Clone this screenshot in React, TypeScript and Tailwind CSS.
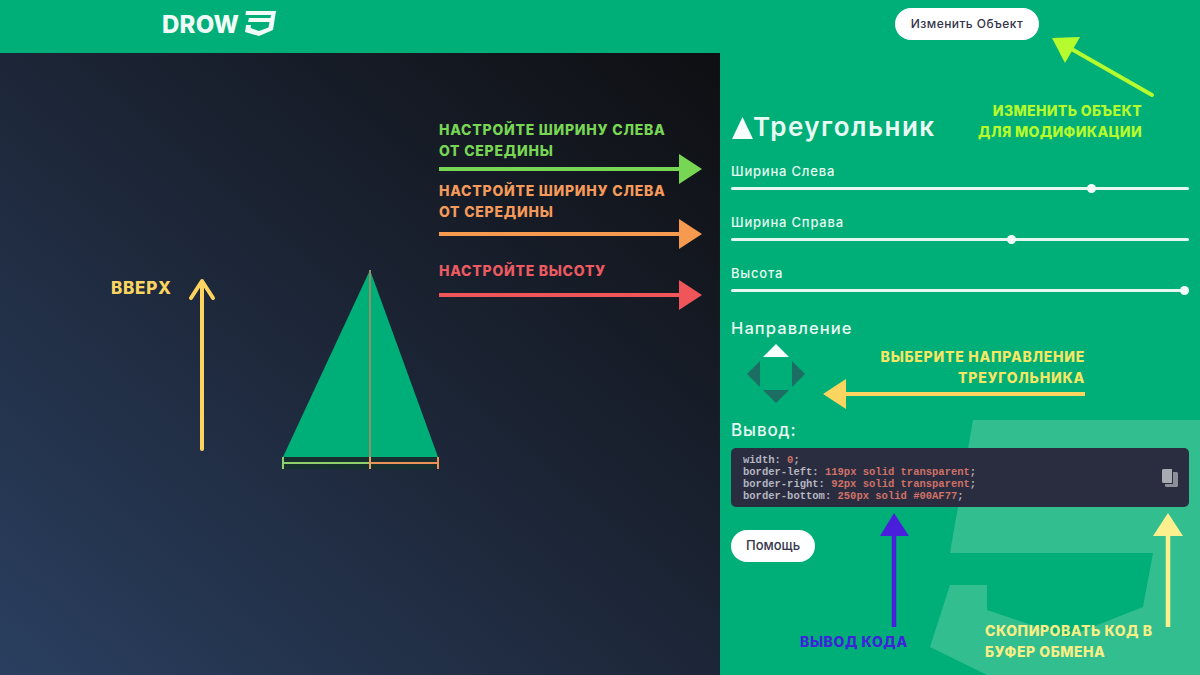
const GREEN = "#00AF77";

function Slider({ label, thumb }: { label: string; thumb: number }) {
  return (
    <div className="h-[51px]">
      <div className="text-[13px] leading-[16px] font-medium tracking-[0.8px] text-[#e6f8f1]">{label}</div>
      <div className="relative mt-[8px] h-[3px] rounded-full bg-[#e4f7f0]">
        <span
          className="absolute top-[-3px] h-[9px] w-[9px] rounded-full bg-[#f2fbf8]"
          style={{ left: thumb }}
        />
      </div>
    </div>
  );
}

function Note({ className, lines }: { className: string; lines: string[] }) {
  return (
    <div className={"absolute z-20 leading-[21px] font-extrabold whitespace-nowrap " + className}>
      {lines.map((l) => (
        <div key={l}>{l}</div>
      ))}
    </div>
  );
}

function Arrows() {
  return (
    <svg className="absolute top-0 left-0 z-10" width="1200" height="675" viewBox="0 0 1200 675" fill="none">
      {/* left panel arrows */}
      <path d="M439 169H680" stroke="#78d655" strokeWidth="4" />
      <path d="M679 154L702 169L679 184Z" fill="#78d655" />
      <path d="M439 234H680" stroke="#f59a4e" strokeWidth="4" />
      <path d="M679 219L702 234L679 249Z" fill="#f59a4e" />
      <path d="M439 295H680" stroke="#f0555a" strokeWidth="4" />
      <path d="M679 280L702 295L679 310Z" fill="#f0555a" />
      <path d="M202 449V283" stroke="#fcd561" strokeWidth="4" strokeLinecap="round" />
      <path d="M191 298L202 281L213 298" stroke="#fcd561" strokeWidth="4" strokeLinecap="round" strokeLinejoin="round" />
      {/* right panel arrows */}
      <path d="M1152 95L1068 47" stroke="#b6fb2d" strokeWidth="4" strokeLinecap="round" />
      <path d="M1052 38L1080 37L1065 63Z" fill="#b6fb2d" />
      <path d="M1085 394H840" stroke="#fcd561" strokeWidth="4" />
      <path d="M846 379L823 394L846 409Z" fill="#fcd561" />
      <path d="M894 627V530" stroke="#4a1fdc" strokeWidth="4.5" />
      <path d="M880 536L894 513L909 536Z" fill="#4a1fdc" />
      <path d="M1168 627V530" stroke="#fbf08d" strokeWidth="4.5" />
      <path d="M1153 536L1168 513L1183 536Z" fill="#fbf08d" />
    </svg>
  );
}

export default function App() {
  return (
    <div
      className="relative flex h-[675px] w-[1200px] flex-col overflow-hidden"
      style={{ fontFamily: "Inter, 'Noto Sans', 'Liberation Sans', sans-serif", backgroundColor: GREEN }}
    >
      <header className="flex h-[53px] shrink-0 items-start bg-[#00AF77] pt-[8px] pl-[162px]">
        <div className="flex h-[34px] w-[733px] items-center gap-[4px]">
          <span className="text-[24px] leading-none font-extrabold tracking-[0.2px] text-[#f0fbf7]">DROW</span>
          <svg className="mb-[3px]" width="33" height="26" viewBox="0 0 33 26" fill="#f0fbf7">
            <path d="M3 0H33L30 19L16 25L2 21L3 14H8L7.6 17L16 20L25.5 16.5L26.5 11H5L6 7H27.500L28 4H2.500Z" />
          </svg>
        </div>
        <button className="flex h-[32px] w-[144px] items-center justify-center rounded-full bg-white text-[12px] font-medium tracking-[0.45px] text-[#34344a]">
          Изменить Объект
        </button>
      </header>

      <main className="flex flex-1">
        <section className="relative w-[720px] bg-linear-to-tr from-[#2a3f60] via-[#1c2536] via-[52%] to-[#0e0f12]">
          <svg className="absolute top-[217px] left-[282px]" width="158" height="200" viewBox="0 0 158 200" fill="none">
            <path d="M1 187L88 0L156 187Z" fill="#00AF77" />
            <rect x="1" y="187" width="155" height="12" fill="#17302f" />
            <path d="M88 0V199" stroke="#8f8f6c" strokeWidth="2" />
            <path d="M1 193H88" stroke="#8fcf6d" strokeWidth="2" />
            <path d="M88 193H156" stroke="#ec8f59" strokeWidth="2" />
            <path d="M1 187V199" stroke="#8fcf6d" strokeWidth="2" />
            <path d="M156 187V199" stroke="#ec8f59" strokeWidth="2" />
            <path d="M88 187V199" stroke="#ec9f60" strokeWidth="2" />
          </svg>
        </section>

        <section className="relative w-[480px] overflow-hidden px-[11px]">
          <svg className="absolute top-[-53px] left-[-720px]" width="1200" height="675" viewBox="0 0 1200 675" fill="#33be8f">
            <path d="M973 420H1200V675H987L930 647L950 585H987V610L1067 637L1143 607L1153 553H950Z" />
          </svg>
          <div className="relative">
            <div className="mt-[59px] flex h-[30px] items-center">
              <svg width="21" height="22" viewBox="0 0 21 22" fill="#f6fdfb" className="mt-[1px] ml-[1px]">
                <path d="M10.5 0L21 22H0Z" />
              </svg>
              <h1 className="text-[26px] leading-none font-semibold tracking-[1.5px] text-[#e9faf4]">Треугольник</h1>
            </div>
            <div className="mt-[21px]">
              <Slider label="Ширина Слева" thumb={356} />
              <Slider label="Ширина Справа" thumb={276} />
              <Slider label="Высота" thumb={449} />
            </div>
            <div className="mt-[2px] text-[16.5px] leading-[20px] font-medium tracking-[1.1px] text-[#e9faf4]">Направление</div>
            <svg className="mt-[6px] ml-[15px]" width="60" height="60" viewBox="0 0 60 60">
              <path d="M30 0L43 13H17Z" fill="#f6fdfb" />
              <path d="M30 59L43 46H17Z" fill="#1c6e63" />
              <path d="M1 30L14 17V43Z" fill="#1c6e63" />
              <path d="M59 30L46 17V43Z" fill="#1c6e63" />
            </svg>
            <div className="mt-[15px] text-[17px] leading-[22px] font-medium tracking-[0.9px] text-[#e9faf4]">Вывод:</div>
            <div className="mt-[7px] flex h-[59px] items-center justify-between rounded-[5px] bg-[#2a2c3f] pr-[11px] pl-[12px]">
              <pre className="font-['Liberation_Mono',monospace] text-[10.5px] leading-[12px] font-bold text-[#b5b7c2]">
                <div>width: <span className="text-[#cf7267]">0</span>;</div>
                <div>border-left: <span className="text-[#cf7267]">119px solid transparent</span>;</div>
                <div>border-right: <span className="text-[#cf7267]">92px solid transparent</span>;</div>
                <div>border-bottom: <span className="text-[#cf7267]">250px solid #00AF77</span>;</div>
              </pre>
              <svg width="16" height="18" viewBox="0 0 16 18" fill="#a9abb3">
                <path d="M0 1.5A1.5 1.5 0 0 1 1.500 0H10V14H1.500A1.500 1.500 0 0 1 0 12.500Z" />
                <path d="M11 3H14.500A1.500 1.500 0 0 1 16 4.500V16.500A1.500 1.500 0 0 1 14.500 18H4.500A1.500 1.500 0 0 1 3 16.500V15H11Z" fill="#8d8f98" />
              </svg>
            </div>
            <button className="mt-[23px] flex h-[32px] w-[84px] items-center justify-center rounded-full bg-white text-[13px] font-medium text-[#34344a]">
              Помощь
            </button>
          </div>
        </section>
      </main>

      <Arrows />

      <Note className="top-[119px] left-[439px] text-[14px] tracking-[0.75px] text-[#78d655]" lines={["НАСТРОЙТЕ ШИРИНУ СЛЕВА", "ОТ СЕРЕДИНЫ"]} />
      <Note className="top-[180px] left-[439px] text-[14px] tracking-[0.75px] text-[#f59a5a]" lines={["НАСТРОЙТЕ ШИРИНУ СЛЕВА", "ОТ СЕРЕДИНЫ"]} />
      <Note className="top-[260px] left-[439px] text-[14px] tracking-[0.75px] text-[#ec5a62]" lines={["НАСТРОЙТЕ ВЫСОТУ"]} />
      <Note className="top-[278px] left-[111px] text-[17px] tracking-[0.75px] text-[#fcd561]" lines={["ВВЕРХ"]} />
      <Note className="top-[100px] right-[58px] text-right text-[14px] tracking-[0.35px] text-[#b6fb2d]" lines={["ИЗМЕНИТЬ ОБЪЕКТ", "ДЛЯ МОДИФИКАЦИИ"]} />
      <Note className="top-[346px] right-[115px] text-right text-[14px] tracking-[0.75px] text-[#f5e663]" lines={["ВЫБЕРИТЕ НАПРАВЛЕНИЕ", "ТРЕУГОЛЬНИКА"]} />
      <Note className="top-[631px] left-[800px] text-[14px] tracking-[0.6px] text-[#3f22dc]" lines={["ВЫВОД КОДА"]} />
      <Note className="top-[620px] left-[985px] text-[14px] tracking-[0.55px] text-[#f7ee85]" lines={["СКОПИРОВАТЬ КОД В", "БУФЕР ОБМЕНА"]} />
    </div>
  );
}
